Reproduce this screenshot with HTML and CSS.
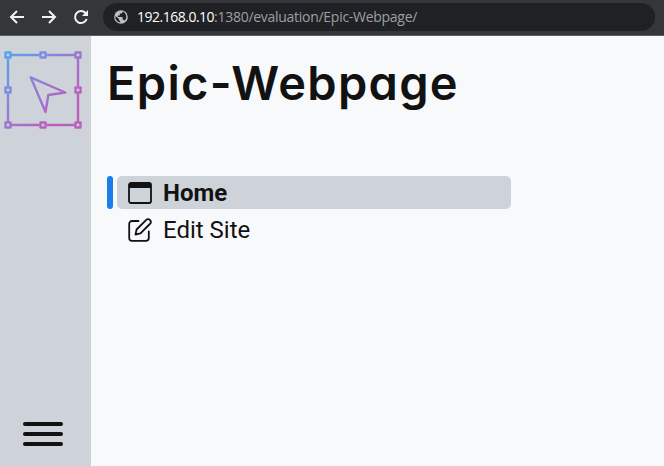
FILE: index.html
```html
<!DOCTYPE html>
<html lang="en">
<head>
<meta charset="utf-8">
<title>Epic-Webpage</title>
<link rel="stylesheet" href="styles.css">
</head>
<body>
<header class="toolbar">
  <svg class="nav-icon" viewBox="0 0 16 16"><path d="M15 8H2M8 2 2 8l6 6"/></svg>
  <svg class="nav-icon" viewBox="0 0 16 16"><path d="M1 8h13M8 2l6 6-6 6"/></svg>
  <svg class="nav-icon" viewBox="0 0 16 16"><path d="M13.7 10A6 6 0 1 1 12.5 4l1.5 2"/><path class="solid" d="M15 1v6H9z"/></svg>
  <div class="address">
    <svg class="globe" viewBox="0 0 14 14"><circle cx="7" cy="7" r="6.8" fill="#bdc1c6"/><path d="M1.5 6 5 9v1.2l1.2 1v1.4A5.6 5.6 0 0 1 1.5 6ZM8.5 1.6v.7c0 .8-.6 1.3-1.4 1.3H5.8v1.3c0 .4-.3.7-.7.7H3.9V7H8c.4 0 .7.3.7.7v2h.6c.7 0 1.2.4 1.4 1A5.5 5.5 0 0 0 8.500 1.600Z" fill="#202124"/></svg>
    <span class="url"><b>192.168.0.10</b>:1380/evaluation/Epic-Webpage/</span>
  </div>
</header>
<div class="app">
  <aside class="sidebar">
    <svg class="logo" viewBox="0 0 80 80">
      <defs><linearGradient id="ink" gradientUnits="userSpaceOnUse" x1="5" y1="5" x2="60" y2="60"><stop stop-color="#58a3ed"/><stop offset=".5" stop-color="#9080d5"/><stop offset="1" stop-color="#bb60bf"/></linearGradient></defs>
      <g fill="none" stroke="url(#ink)" stroke-width="2.4" stroke-linejoin="round">
        <path d="M8 5H36.500M43.500 5H72M8 75H36.500M43.500 75H72M5 8V36.500M5 43.500V72M75 8V36.500M75 43.500V72"/>
        <path d="M2.500 2.500h5v5h-5zM37.500 2.500h5v5h-5zM72.500 2.500h5v5h-5zM2.500 37.500h5v5h-5zM72.500 37.500h5v5h-5zM2.500 72.500h5v5h-5zM37.500 72.500h5v5h-5zM72.500 72.500h5v5h-5z"/>
        <path d="M27.700 27.300 62.300 42.500 45.300 45 42.500 62z"/>
      </g>
    </svg>
    <div class="menu"><span></span><span></span><span></span></div>
  </aside>
  <main class="content">
    <h1>Epic-Webpage</h1>
    <nav>
      <div class="row current">
        <div class="item">
          <svg class="icon" viewBox="0 0 24 24"><rect x="1" y="2" width="22" height="20" rx="2"/><path class="fill" d="M1 7V4a2 2 0 0 1 2-2h18a2 2 0 0 1 2 2v3z"/></svg>
          <span>Home</span>
        </div>
      </div>
      <div class="row">
        <div class="item">
          <svg class="icon" viewBox="0 0 24 24"><path d="M10.500 3H4A2.800 2.800 0 0 0 1.200 5.800V20A2.800 2.800 0 0 0 4 22.800h14a2.800 2.800 0 0 0 2.800-2.800v-6.500M7.500 16.500l1.100-5L18.500 1.700a2.100 2.100 0 0 1 3 0l.8.8a2.100 2.100 0 0 1 0 3L12.500 15.400z"/></svg>
          <span>Edit Site</span>
        </div>
      </div>
    </nav>
  </main>
</div>
</body>
</html>
```
FILE: styles.css
```css
* { box-sizing: border-box; }
body {
  margin: 0;
  height: 466px;
  display: flex;
  flex-direction: column;
  background: #f8f9fb;
  color: #121212;
  font-family: Roboto, sans-serif;
  overflow: hidden;
}
.toolbar {
  height: 36px;
  flex: none;
  display: flex;
  align-items: center;
  gap: 16px;
  padding: 0 9px 2px;
  background: #35363a;
  border-bottom: 1px solid #5b5c5f;
}
.nav-icon {
  width: 16px;
  height: 16px;
  flex: none;
  fill: none;
  stroke: #f1f3f4;
  stroke-width: 2;
}
.nav-icon .solid { fill: #f1f3f4; stroke: none; }
.address {
  flex: 1;
  height: 28px;
  margin-left: -2px;
  padding-left: 11px;
  display: flex;
  align-items: center;
  gap: 9px;
  border-radius: 14px;
  background: #202124;
}
.globe { width: 14px; height: 14px; flex: none; }
.url {
  font: 14px/20px "Open Sans", sans-serif;
  letter-spacing: -0.28px;
  color: #9aa0a6;
  white-space: nowrap;
}
.url b { font-weight: 400; letter-spacing: -0.5px; color: #fff; }
.app { flex: 1; display: flex; }
.sidebar {
  width: 91px;
  padding: 14px 0 20px 3px;
  display: flex;
  flex-direction: column;
  justify-content: space-between;
  background: #ced3da;
}
.logo { width: 80px; height: 80px; }
.menu {
  width: 40px;
  margin-left: 20px;
  display: flex;
  flex-direction: column;
  gap: 6px;
}
.menu span { height: 4px; border-radius: 2px; background: #121212; }
.content { flex: 1; padding: 15px 0 0 16px; }
h1 {
  margin: 0;
  font: 600 47px/64px Inter, sans-serif;
  font-feature-settings: "cv11";
  letter-spacing: 1.3px;
  white-space: nowrap;
}
nav {
  width: 404px;
  margin-top: 61px;
  display: flex;
  flex-direction: column;
  gap: 4px;
}
.row { display: flex; gap: 4px; height: 33px; }
.row::before { content: ""; width: 6px; border-radius: 3px; }
.current::before { background: #1a7eea; }
.item {
  flex: 1;
  display: flex;
  align-items: center;
  gap: 11px;
  padding-left: 11px;
  border-radius: 5px;
  font-size: 24px;
  line-height: 33px;
}
.item span { padding-top: 2px; }
.current .item { background: #ced3da; font-weight: 700; }
.icon {
  width: 24px;
  height: 24px;
  fill: none;
  stroke: #121212;
  stroke-width: 1.8;
  stroke-linecap: round;
  stroke-linejoin: round;
}
.icon .fill { fill: #121212; stroke: none; }
```
